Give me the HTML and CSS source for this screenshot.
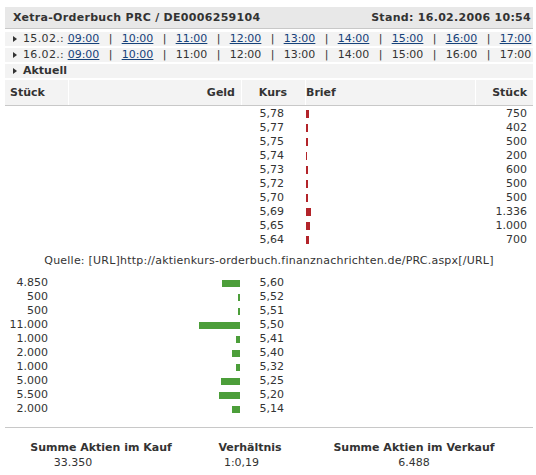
FILE: index.html
```html
<!DOCTYPE html>
<html lang="de">
<head>
<meta charset="utf-8">
<title>Xetra-Orderbuch PRC</title>
<link rel="stylesheet" href="styles.css">
</head>
<body>
<div class="panel">
  <div class="title">
    <span>Xetra-Orderbuch PRC / DE0006259104</span>
    <span>Stand: 16.02.2006 10:54</span>
  </div>
  <div class="times">
    <div class="trow"><svg class="tri" width="4" height="6" viewBox="0 0 4 6"><path d="M0 0L4 3L0 6Z"/></svg><span class="date">15.02.:</span> <a href="#">09:00</a><span class="sep">|</span><a href="#">10:00</a><span class="sep">|</span><a href="#">11:00</a><span class="sep">|</span><a href="#">12:00</a><span class="sep">|</span><a href="#">13:00</a><span class="sep">|</span><a href="#">14:00</a><span class="sep">|</span><a href="#">15:00</a><span class="sep">|</span><a href="#">16:00</a><span class="sep">|</span><a href="#">17:00</a></div>
    <div class="trow"><svg class="tri" width="4" height="6" viewBox="0 0 4 6"><path d="M0 0L4 3L0 6Z"/></svg><span class="date">16.02.:</span> <a href="#">09:00</a><span class="sep">|</span><a href="#">10:00</a><span class="sep">|</span>11:00<span class="sep">|</span>12:00<span class="sep">|</span>13:00<span class="sep">|</span>14:00<span class="sep">|</span>15:00<span class="sep">|</span>16:00<span class="sep">|</span>17:00</div>
    <div class="trow bold"><svg class="tri" width="4" height="6" viewBox="0 0 4 6"><path d="M0 0L4 3L0 6Z"/></svg>Aktuell</div>
  </div>
  <div class="grid head">
    <div class="c1">Stück</div>
    <div class="c2">Geld</div>
    <div class="c3">Kurs</div>
    <div class="c4">Brief</div>
    <div class="c5">Stück</div>
  </div>
  <div class="asks">
    <div class="grid row"><div></div><div></div><div class="kurs">5,78</div><div class="brief"><span class="bar red" style="width:3px"></span></div><div class="qty">750</div></div>
    <div class="grid row"><div></div><div></div><div class="kurs">5,77</div><div class="brief"><span class="bar red" style="width:2px"></span></div><div class="qty">402</div></div>
    <div class="grid row"><div></div><div></div><div class="kurs">5,75</div><div class="brief"><span class="bar red" style="width:2px"></span></div><div class="qty">500</div></div>
    <div class="grid row"><div></div><div></div><div class="kurs">5,74</div><div class="brief"><span class="bar red" style="width:1px"></span></div><div class="qty">200</div></div>
    <div class="grid row"><div></div><div></div><div class="kurs">5,73</div><div class="brief"><span class="bar red" style="width:2px"></span></div><div class="qty">600</div></div>
    <div class="grid row"><div></div><div></div><div class="kurs">5,72</div><div class="brief"><span class="bar red" style="width:2px"></span></div><div class="qty">500</div></div>
    <div class="grid row"><div></div><div></div><div class="kurs">5,70</div><div class="brief"><span class="bar red" style="width:2px"></span></div><div class="qty">500</div></div>
    <div class="grid row"><div></div><div></div><div class="kurs">5,69</div><div class="brief"><span class="bar red" style="width:5px"></span></div><div class="qty">1.336</div></div>
    <div class="grid row"><div></div><div></div><div class="kurs">5,65</div><div class="brief"><span class="bar red" style="width:4px"></span></div><div class="qty">1.000</div></div>
    <div class="grid row"><div></div><div></div><div class="kurs">5,64</div><div class="brief"><span class="bar red" style="width:3px"></span></div><div class="qty">700</div></div>
  </div>
  <div class="source">Quelle: [URL]http://aktienkurs-orderbuch.finanznachrichten.de/PRC.aspx[/URL]</div>
  <div class="bids">
    <div class="grid row"><div class="bqty">4.850</div><div class="geld"><span class="bar green" style="width:18px"></span></div><div class="kurs">5,60</div><div></div><div></div></div>
    <div class="grid row"><div class="bqty">500</div><div class="geld"><span class="bar green" style="width:2px"></span></div><div class="kurs">5,52</div><div></div><div></div></div>
    <div class="grid row"><div class="bqty">500</div><div class="geld"><span class="bar green" style="width:2px"></span></div><div class="kurs">5,51</div><div></div><div></div></div>
    <div class="grid row"><div class="bqty">11.000</div><div class="geld"><span class="bar green" style="width:41px"></span></div><div class="kurs">5,50</div><div></div><div></div></div>
    <div class="grid row"><div class="bqty">1.000</div><div class="geld"><span class="bar green" style="width:4px"></span></div><div class="kurs">5,41</div><div></div><div></div></div>
    <div class="grid row"><div class="bqty">2.000</div><div class="geld"><span class="bar green" style="width:8px"></span></div><div class="kurs">5,40</div><div></div><div></div></div>
    <div class="grid row"><div class="bqty">1.000</div><div class="geld"><span class="bar green" style="width:4px"></span></div><div class="kurs">5,32</div><div></div><div></div></div>
    <div class="grid row"><div class="bqty">5.000</div><div class="geld"><span class="bar green" style="width:19px"></span></div><div class="kurs">5,25</div><div></div><div></div></div>
    <div class="grid row"><div class="bqty">5.500</div><div class="geld"><span class="bar green" style="width:21px"></span></div><div class="kurs">5,20</div><div></div><div></div></div>
    <div class="grid row"><div class="bqty">2.000</div><div class="geld"><span class="bar green" style="width:8px"></span></div><div class="kurs">5,14</div><div></div><div></div></div>
  </div>
  <div class="summary">
    <div class="scol s1"><div class="slabel">Summe Aktien im Kauf</div><div class="sval">33.350</div></div>
    <div class="scol s2"><div class="slabel">Verhältnis</div><div class="sval">1:0,19</div></div>
    <div class="scol s3"><div class="slabel">Summe Aktien im Verkauf</div><div class="sval">6.488</div></div>
  </div>
</div>
</body>
</html>
```

FILE: styles.css
```css
html, body {
  margin: 0;
  padding: 0;
  background: #ffffff;
}
body {
  font-family: "DejaVu Sans", Verdana, sans-serif;
  font-size: 11px;
  color: #333333;
}
.panel {
  width: 528px;
  margin: 7px 0 0 5px;
}
.title {
  display: flex;
  justify-content: space-between;
  align-items: center;
  height: 21px;
  padding: 0 2px 0 8px;
  background: #e8e8e8;
  border-bottom: 1px solid #c8c8c8;
  font-weight: bold;
  letter-spacing: 0.3px;
}
.times {
  display: flex;
  flex-direction: column;
  gap: 2px;
  margin-top: 3px;
}
.trow {
  height: 14px;
  line-height: 14px;
  background: #f3f3f3;
  padding-left: 8px;
  white-space: nowrap;
  overflow: hidden;
}
.trow.bold {
  font-weight: bold;
}
.date {
  letter-spacing: 0.35px;
}
.tri {
  fill: #333333;
  margin-right: 6px;
  vertical-align: 0px;
}
.trow a {
  color: #16427a;
  text-decoration: underline;
}
.sep {
  display: inline-block;
  width: 22.3px;
  text-align: center;
}
.grid {
  display: grid;
  grid-template-columns: 63px 173px 64px 170px 58px;
}
.head {
  margin-top: 2px;
  height: 25px;
  line-height: 25px;
  font-weight: bold;
  border-bottom: 1px solid #c8c8c8;
}
.head > div {
  background: #f3f3f3;
  border-left: 1px solid #ffffff;
}
.head > div:first-child {
  border-left: none;
}
.head .c1 { padding-left: 5px; }
.head .c2 { text-align: right; padding-right: 6px; }
.head .c3 { text-align: right; padding-right: 18px; }
.head .c4 { padding-left: 0px; }
.head .c5 { text-align: right; padding-right: 6px; }
.asks {
  padding-top: 1px;
}
.row {
  height: 14px;
  line-height: 14px;
}
.kurs {
  text-align: right;
  padding-right: 21px;
}
.brief {
  display: flex;
  align-items: center;
  padding-left: 1px;
}
.qty {
  text-align: right;
  padding-right: 6px;
}
.bqty {
  text-align: right;
  padding-right: 20px;
}
.geld {
  display: flex;
  align-items: center;
  justify-content: flex-end;
  padding-right: 1px;
}
.bar {
  display: block;
  height: 7px;
}
.red {
  background: #b3242a;
  height: 8px;
}
.green {
  background: #4c9e3a;
}
.source {
  margin-top: 7px;
  height: 14px;
  line-height: 14px;
  text-align: center;
  letter-spacing: 0.22px;
  white-space: nowrap;
}
.bids {
  margin-top: 8px;
}
.summary {
  margin-top: 11px;
  border-top: 1px solid #c8c8c8;
  padding-top: 12px;
  display: grid;
  grid-template-columns: 192px 106px 222px;
}
.slabel {
  font-weight: bold;
  height: 15px;
  line-height: 15px;
  text-align: center;
}
.sval {
  height: 15px;
  line-height: 15px;
  text-align: center;
}
.s1 .sval { padding-right: 56px; }
.s2 .sval { padding-right: 17px; }
```
